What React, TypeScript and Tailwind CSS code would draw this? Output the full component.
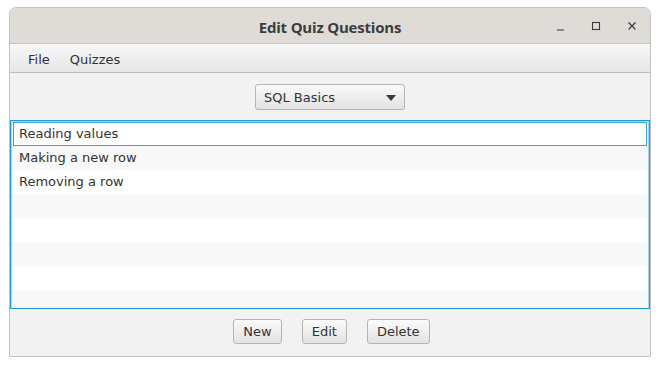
import { useState } from 'react';

const questions = ['Reading values', 'Making a new row', 'Removing a row'];

const font = { fontFamily: '"DejaVu Sans", sans-serif' };

function FxButton({ label }: { label: string }) {
  return (
    <button className="h-[25px] px-[9px] border border-[#b5b5b5] rounded-[3px] bg-gradient-to-b from-[#fbfbfb] to-[#e3e3e3] text-[13px] text-[#333]">
      {label}
    </button>
  );
}

export default function App() {
  const [selected, setSelected] = useState(0);
  const rows = Array.from({ length: 8 }, (_, i) => questions[i] ?? '');

  return (
    <div className="w-[660px] h-[366px] bg-white pt-[7px] pl-[9px]" style={font}>
      <div className="w-[642px] h-[350px] border border-[#c3c3c3] rounded-t-[7px] flex flex-col overflow-hidden bg-[#f2f2f2]">
        {/* title bar */}
        <div className="h-[36px] shrink-0 bg-[#dfdcd8] border-b border-[#c8c5c1] flex items-center relative">
          <div className="flex-1 text-center pt-[3px] text-[15px] font-bold text-[#3c3c3c] font-['Open_Sans',sans-serif] tracking-[-0.2px]">
            Edit Quiz Questions
          </div>
          <div className="absolute right-[13px] top-[13px] flex items-center gap-[26px]">
            <svg width="10" height="10" viewBox="0 0 10 10">
              <path d="M2 9h7" stroke="#3a3a3a" strokeWidth="1.2" />
            </svg>
            <svg width="10" height="10" viewBox="0 0 10 10">
              <rect x="1.5" y="1.5" width="7" height="7" fill="none" stroke="#3a3a3a" strokeWidth="1.1" />
            </svg>
            <svg width="10" height="10" viewBox="0 0 10 10">
              <path d="M1.5 1.5l7 7M8.5 1.5l-7 7" stroke="#3a3a3a" strokeWidth="1.2" />
            </svg>
          </div>
        </div>

        {/* menu bar */}
        <div className="h-[29px] shrink-0 bg-gradient-to-b from-[#f8f8f8] to-[#e6e6e6] border-b border-[#bcbcbc] flex items-center pt-[3px] pl-[18px] gap-[20px] text-[13px] text-[#333]">
          <span>File</span>
          <span>Quizzes</span>
        </div>

        {/* combo */}
        <div className="flex justify-center pt-[11px] pb-[10px]">
          <div className="w-[150px] h-[26px] border border-[#b5b5b5] rounded-[3px] bg-gradient-to-b from-[#f9f9f9] to-[#e3e3e3] flex items-center pt-px pl-[8px] pr-[8px] text-[13px] text-[#333]">
            <span className="flex-1">SQL Basics</span>
            <svg width="10" height="6" viewBox="0 0 10 6">
              <path d="M0 0h10L5 6z" fill="#3b3b3b" />
            </svg>
          </div>
        </div>

        {/* list */}
        <div className="h-[189px] shrink-0 border border-[#1e9bd4] shadow-[inset_0_0_0_1px_#a9d7ee] p-px flex flex-col bg-white overflow-hidden">
          {rows.map((q, i) => (
            <div
              key={i}
              onClick={() => q && setSelected(i)}
              className={`h-[24px] shrink-0 flex items-center text-[13px] text-[#333] ${i % 2 === 1 ? 'bg-[#f8f8f8]' : 'bg-white'} ${
                i === selected ? 'border border-[#39a7d9] mx-px pl-[5px]' : 'pl-[7px]'
              }`}
            >
              {q}
            </div>
          ))}
        </div>

        {/* buttons */}
        <div className="flex-1 flex justify-center items-start pt-[10px] gap-[20px] pl-[3px]">
          <FxButton label="New" />
          <FxButton label="Edit" />
          <FxButton label="Delete" />
        </div>
      </div>
    </div>
  );
}
